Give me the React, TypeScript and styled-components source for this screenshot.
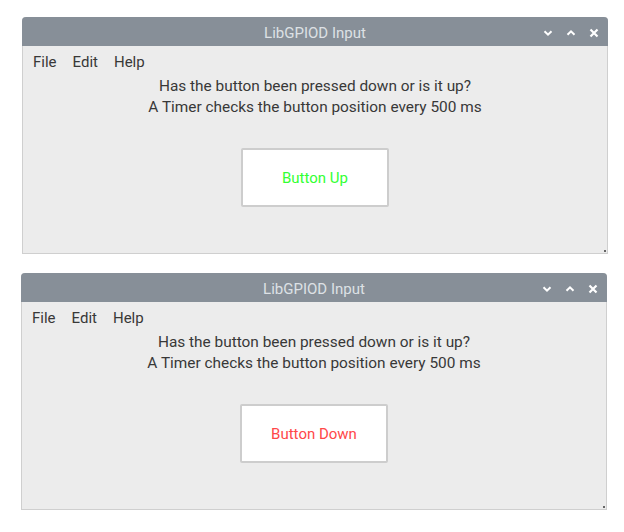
import React from 'react';
import styled, { createGlobalStyle } from 'styled-components';

const GlobalStyle = createGlobalStyle`
  html, body {
    margin: 0;
    padding: 0;
    background: #ffffff;
    font-family: Roboto, 'Liberation Sans', sans-serif;
  }
`;

interface WindowProps {
  offset: number;
  pressed: boolean;
}

const ChevronDown = () => (
  <svg width="10" height="10" viewBox="0 0 10 10">
    <path d="M1.5 3.2 L5 6.7 L8.5 3.2" fill="none" stroke="#ffffff" strokeWidth="2" />
  </svg>
);

const ChevronUp = () => (
  <svg width="10" height="10" viewBox="0 0 10 10">
    <path d="M1.5 6.8 L5 3.3 L8.5 6.8" fill="none" stroke="#ffffff" strokeWidth="2" />
  </svg>
);

const CloseIcon = () => (
  <svg width="10" height="10" viewBox="0 0 10 10">
    <path d="M1.5 1.5 L8.5 8.5 M8.5 1.5 L1.5 8.5" fill="none" stroke="#ffffff" strokeWidth="2.2" />
  </svg>
);

const GpioWindow: React.FC<WindowProps> = ({ offset, pressed }) => (
  <Window offset={offset}>
    <TitleBar>
      <span />
      <Title>LibGPIOD Input</Title>
      <Controls>
        <ChevronDown />
        <ChevronUp />
        <CloseIcon />
      </Controls>
    </TitleBar>
    <MenuBar>
      <MenuItem>File</MenuItem>
      <MenuItem>Edit</MenuItem>
      <MenuItem>Help</MenuItem>
    </MenuBar>
    <Label>
      Has the button been pressed down or is it up?
      <br />
      A Timer checks the button position every 500 ms
    </Label>
    <ButtonRow>
      <StateButton pressed={pressed}>
        {pressed ? 'Button Down' : 'Button Up'}
      </StateButton>
    </ButtonRow>
    <Grip />
  </Window>
);

const App: React.FC = () => (
  <>
    <GlobalStyle />
    <Page>
      <GpioWindow offset={22} pressed={false} />
      <GpioWindow offset={21} pressed />
    </Page>
  </>
);

const Page = styled.div`
  display: flex;
  flex-direction: column;
  gap: 19px;
  padding-top: 17px;
`;

const Window = styled.div<{ offset: number }>`
  position: relative;
  box-sizing: border-box;
  width: 586px;
  height: 237px;
  margin-left: ${props => props.offset}px;
  background: #ececec;
  border: 1px solid #cfcfcf;
  border-top: none;
  border-radius: 4px 4px 0 0;
  display: flex;
  flex-direction: column;
`;

const TitleBar = styled.div`
  box-sizing: border-box;
  height: 29px;
  padding-top: 3px;
  margin: 0 -1px;
  background: #878f98;
  border-radius: 4px 4px 0 0;
  display: grid;
  grid-template-columns: 1fr auto 1fr;
  align-items: center;
`;

const Title = styled.div`
  color: #dde1e5;
  font-size: 15px;
  line-height: 18px;
`;

const Controls = styled.div`
  justify-self: end;
  display: flex;
  align-items: center;
  gap: 13px;
  padding-right: 9px;
`;

const MenuBar = styled.div`
  height: 30px;
  padding-top: 1px;
  display: flex;
  align-items: center;
  gap: 16px;
  padding-left: 10px;
`;

const MenuItem = styled.span`
  color: #383838;
  font-size: 15px;
`;

const Label = styled.div`
  margin-top: -1px;
  text-align: center;
  color: #383838;
  font-size: 15.4px;
  line-height: 21px;
`;

const ButtonRow = styled.div`
  display: flex;
  justify-content: center;
  margin-top: 30px;
`;

const StateButton = styled.div<{ pressed: boolean }>`
  box-sizing: border-box;
  width: 148px;
  height: 59px;
  background: #ffffff;
  border: 2px solid #cdcdcd;
  border-radius: 2px;
  display: flex;
  align-items: center;
  justify-content: center;
  font-size: 15px;
  color: ${props => (props.pressed ? '#ff4848' : '#33ff33')};
`;

const Grip = styled.div`
  position: absolute;
  right: 1px;
  bottom: 1px;
  width: 2px;
  height: 2px;
  background: #666666;
`;

export default App;
